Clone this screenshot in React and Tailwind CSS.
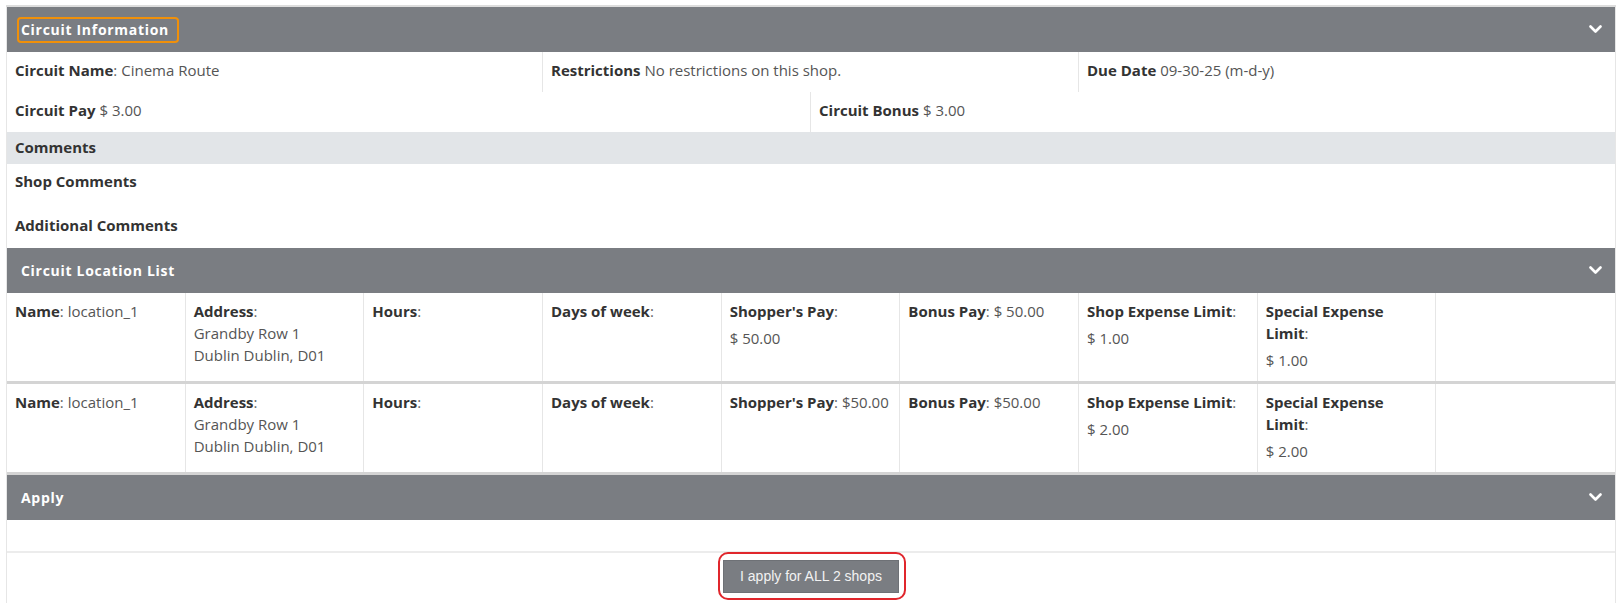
import React from 'react'

const FONT = { fontFamily: '"Open Sans", "Noto Sans", sans-serif' }

function Chevron() {
  return (
    <svg width="13" height="9" viewBox="0 0 13 9" className="text-white">
      <polyline points="1.5,1.5 6.5,6.5 11.5,1.5" fill="none" stroke="currentColor" strokeWidth="2.6" strokeLinecap="round" strokeLinejoin="round" />
    </svg>
  )
}

function SectionHeader({ title, focused }) {
  return (
    <div className="h-[45px] bg-[#7a7d82] flex items-center justify-between pl-[10px] pr-[13px]">
      <span
        className={`pl-[2px] pr-[8px] py-[2px] rounded-[4px] border-2 text-[14px] font-bold tracking-[0.7px] text-white leading-[18px] ${
          focused ? 'border-[#f0900a]' : 'border-transparent'
        }`}
      >
        {title}
      </span>
      <Chevron />
    </div>
  )
}

function Field({ label, value, colon = false }) {
  return (
    <span>
      <span className="font-bold text-[#333]">{label}</span>
      {colon && <span className="text-[#666]">:</span>} <span className="text-[#555]">{value}</span>
    </span>
  )
}

const locations = [
  { shopperPay: '$ 50.00', bonus: '$ 50.00', shopLimit: '$ 1.00', specialLimit: '$ 1.00', payInline: false },
  { shopperPay: '$50.00', bonus: '$50.00', shopLimit: '$ 2.00', specialLimit: '$ 2.00', payInline: true },
]

function LocationRow({ loc }) {
  const cell = 'px-[8px] pt-[7px] pb-[10px] border-r border-[#e6e6e6] leading-[22px]'
  const label = 'font-bold text-[#333]'
  const colon = <span className="text-[#666]">:</span>
  return (
    <div className="grid grid-cols-9 border-b-[3px] border-[#d4d4d4] text-[15px]">
      <div className={cell}>
        <span className={label}>Name</span>{colon} <span className="text-[#555]">location_1</span>
      </div>
      <div className={cell}>
        <div><span className={label}>Address</span>{colon}</div>
        <div className="text-[#555]">Grandby Row 1</div>
        <div className="text-[#555]">Dublin Dublin, D01</div>
      </div>
      <div className={cell}>
        <span className={label}>Hours</span>{colon}
      </div>
      <div className={cell}>
        <span className={label}>Days of week</span>{colon}
      </div>
      <div className={cell}>
        {loc.payInline ? (
          <div><span className={label}>Shopper's Pay</span>{colon} <span className="text-[#555]">{loc.shopperPay}</span></div>
        ) : (
          <>
            <div><span className={label}>Shopper's Pay</span>{colon}</div>
            <div className="mt-[5px] text-[#555]">{loc.shopperPay}</div>
          </>
        )}
      </div>
      <div className={cell}>
        <span className={label}>Bonus Pay</span>{colon} <span className="text-[#555]">{loc.bonus}</span>
      </div>
      <div className={cell}>
        <div><span className={label}>Shop Expense Limit</span>{colon}</div>
        <div className="mt-[5px] text-[#555]">{loc.shopLimit}</div>
      </div>
      <div className={cell}>
        <div className={label}>Special Expense</div>
        <div><span className={label}>Limit</span>{colon}</div>
        <div className="mt-[5px] text-[#555]">{loc.specialLimit}</div>
      </div>
      <div className="px-[8px]" />
    </div>
  )
}

export default function App() {
  return (
    <div className="bg-white w-[1621px] h-[605px] pt-[5px] pl-[6px] pr-[5px]" style={FONT}>
      <div className="border-t-2 border-[#dddddd]">
        <div className="border-x border-[#e6e6e6] pb-[3px]">
          <SectionHeader title="Circuit Information" focused />

          <div className="grid grid-cols-3 text-[15px]">
            <div className="h-[40px] flex items-center px-[8px] pb-[4px] border-r border-[#e6e6e6]">
              <Field label="Circuit Name" value="Cinema Route" colon />
            </div>
            <div className="h-[40px] flex items-center px-[8px] pb-[4px] border-r border-[#e6e6e6]">
              <Field label="Restrictions" value="No restrictions on this shop." />
            </div>
            <div className="h-[40px] flex items-center px-[8px] pb-[4px]">
              <Field label="Due Date" value="09-30-25 (m-d-y)" />
            </div>
          </div>
          <div className="grid grid-cols-2 text-[15px]">
            <div className="h-[40px] flex items-center px-[8px] pb-[4px] border-r border-[#e6e6e6]">
              <Field label="Circuit Pay" value="$ 3.00" />
            </div>
            <div className="h-[40px] flex items-center px-[8px] pb-[4px]">
              <Field label="Circuit Bonus" value="$ 3.00" />
            </div>
          </div>

          <div className="h-[32px] bg-[#e2e5e8] flex items-center px-[8px] pb-[1px] text-[15px] font-bold text-[#333]">
            Comments
          </div>
          <div className="flex flex-col gap-[24px] pt-[7px] pb-[13px] px-[8px] text-[15px] font-bold text-[#333] leading-[20px]">
            <div>Shop Comments</div>
            <div>Additional Comments</div>
          </div>

          <SectionHeader title="Circuit Location List" />
          {locations.map((loc, i) => (
            <LocationRow key={i} loc={loc} />
          ))}

          <SectionHeader title="Apply" />
          <div className="grid grid-cols-2 h-[33px] border-b-2 border-[#ececec]">
            <div />
            <div />
          </div>
          <div className="flex justify-center pt-[7px] pb-[7px]">
            <div className="relative">
              <button
                className="h-[33px] px-[16px] bg-[#7a7d82] text-[#f2f2f2] text-[14px] border border-[#6e7176]"
                style={{ fontFamily: '"Liberation Sans", Arial, sans-serif' }}
              >
                I apply for ALL 2 shops
              </button>
              <div className="absolute -left-[5px] -right-[7px] -top-[8px] -bottom-[7px] border-2 border-[#e0262c] rounded-[10px] pointer-events-none" />
            </div>
          </div>
        </div>
      </div>
    </div>
  )
}
